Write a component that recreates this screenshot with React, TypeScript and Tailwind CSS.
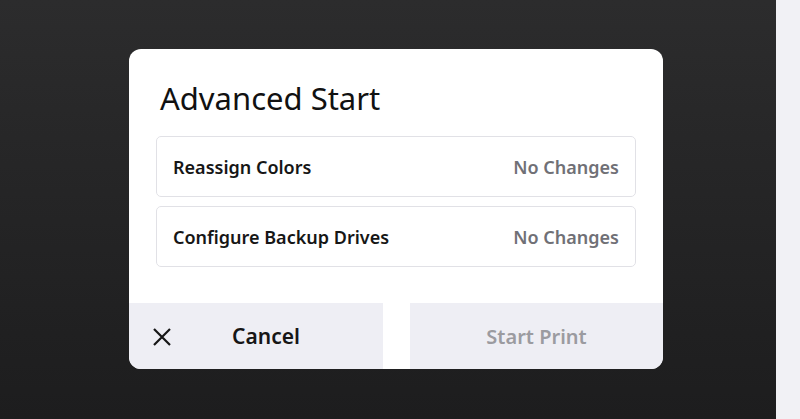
import React from "react";

export default function App() {
  return (
    <div
      className="flex h-[419px] w-[800px] overflow-hidden"
      style={{ fontFamily: '"Noto Sans", "IBM Plex Sans", sans-serif' }}
    >
      <div className="flex h-full w-[776px] bg-gradient-to-b from-[#2c2c2d] to-[#1d1d1e] pl-[129px] pt-[49px]">
        <div className="flex h-[320px] w-[534px] flex-col overflow-hidden rounded-[12px] bg-white">
          <div className="px-[31px] pt-[29px] text-[31px] leading-[40px] text-[#111]">
            Advanced Start
          </div>
          <div className="mt-[18px] flex flex-col gap-[9px] px-[27px]">
            <div className="flex h-[61px] items-center justify-between rounded-[5px] border border-[#e1e1e6] px-[16px] pt-[2px]">
              <span className="text-[18px] font-semibold text-[#161616]">Reassign Colors</span>
              <span className="text-[18px] font-semibold text-[#707076]">No Changes</span>
            </div>
            <div className="flex h-[61px] items-center justify-between rounded-[5px] border border-[#e1e1e6] px-[16px] pt-[2px]">
              <span className="text-[18px] font-semibold text-[#161616]">Configure Backup Drives</span>
              <span className="text-[18px] font-semibold text-[#707076]">No Changes</span>
            </div>
          </div>
          <div className="mt-auto flex h-[66px] gap-[27px]">
            <div className="relative flex w-[254px] items-center justify-center bg-[#eeeef4] pl-[20px] pt-[1px]">
              <svg
                className="absolute left-[23px] top-[24px]"
                width="20"
                height="20"
                viewBox="0 0 20 20"
                fill="none"
                stroke="#161616"
                strokeWidth="2.2"
              >
                <path d="M2 2 L18 18 M18 2 L2 18" />
              </svg>
              <span className="text-[21px] font-semibold text-[#161616]">Cancel</span>
            </div>
            <div className="flex flex-1 items-center justify-center bg-[#eeeef4] pt-[1px]">
              <span className="text-[20px] font-semibold text-[#9b9ba0]">Start Print</span>
            </div>
          </div>
        </div>
      </div>
      <div className="h-full flex-1 bg-[#f1f1f5]" />
    </div>
  );
}
